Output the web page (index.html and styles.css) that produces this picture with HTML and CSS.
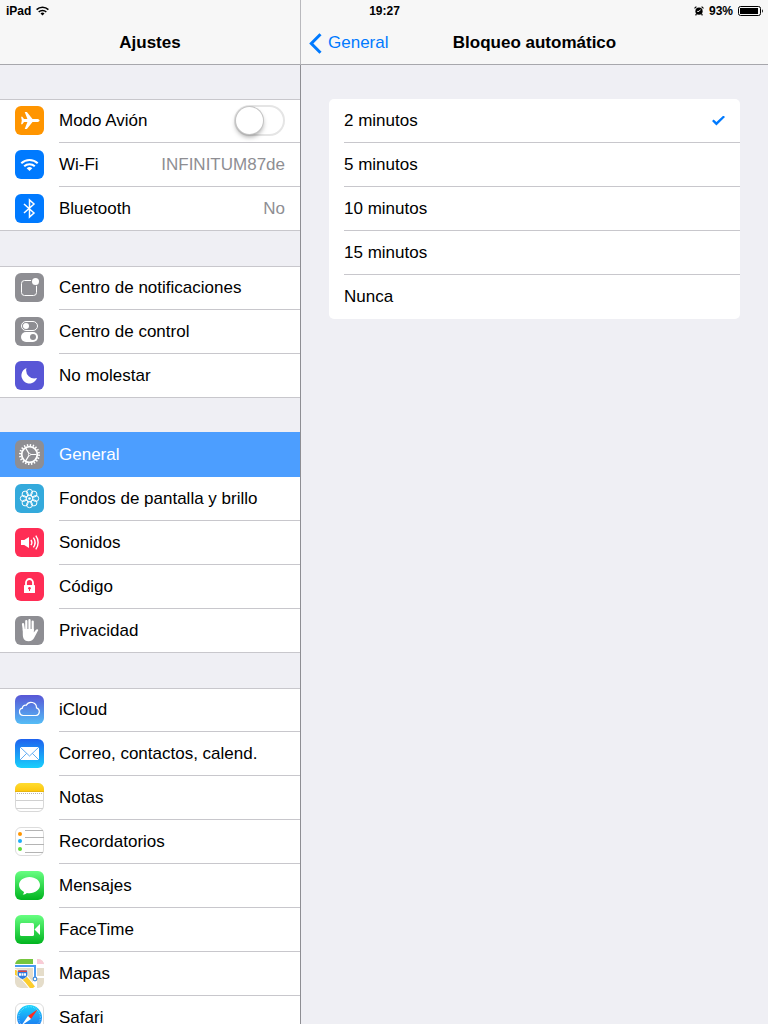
FILE: index.html
```html
<!DOCTYPE html>
<html lang="es">

<head>
    <meta charset="UTF-8">
    <meta name="viewport" content="width=device-width, initial-scale=1.0">
    <title>Ajustes</title>
    <link rel="stylesheet" href="styles.css">
</head>

<body>
    <!-- status bar -->
    <div class="status">
        <div class="status-left">
            <span>iPad</span>
            <svg width="13" height="10" viewBox="0 0 13 10" fill="none" stroke="#000" stroke-width="1.5">
                <path d="M.6 3.6a8.4 8.4 0 0 1 11.8 0M2.7 6a5.4 5.4 0 0 1 7.6 0" />
                <path d="M6.5 9.6L4.5 7.6a2.8 2.8 0 0 1 4 0z" fill="#000" stroke="none" />
            </svg>
        </div>
        <div>19:27</div>
        <div class="status-right">
            <svg width="10" height="10" viewBox="0 0 10 10" fill="none" stroke="#000">
                <circle cx="5" cy="5.2" r="3.6" fill="#000" stroke="none" />
                <path d="M.5 2.4L2.4.6M9.5 2.4L7.6.6M2.4 8l-.8 1.4M7.600 8l.8 1.4" stroke-width="1.2" />
                <path d="M6.5 3.600L5 5.400H3.200" stroke="#f7f7f7" />
            </svg>
            <span>93%</span>
            <svg width="25" height="10" viewBox="0 0 25 10">
                <rect x=".5" y=".5" width="22" height="9" rx="2" fill="none" stroke="#000" />
                <rect x="2" y="2" width="18" height="6" fill="#000" />
                <path d="M24 3.2c1.2.7 1.2 2.9 0 3.6z" fill="#000" />
            </svg>
        </div>
    </div>

    <div class="app">
        <!-- left column -->
        <nav class="sidebar">
            <header class="bar">
                <h1>Ajustes</h1>
            </header>
            <div class="scroll">
                <div class="group">
                    <div class="row">
                        <svg class="icon" viewBox="0 0 29 29">
                            <rect width="29" height="29" rx="6" fill="#ff9500" />
                            <path d="M24.6 14.5c0 .9-1.2 1.5-2.6 1.5h-4.500l-5.600 7h-2.200l2.7-7H9l-1.7 2.2H6.1l.7-3.7-.7-3.7h1.2L9 13h3.4L9.700 6h2.200l5.600 7H22c1.4 0 2.6.6 2.6 1.5z" fill="#fff" />
                        </svg>
                        <div class="cell">
                            <label for="avion">Modo Avión</label>
                            <input class="switch" type="checkbox" id="avion">
                        </div>
                    </div>
                    <a class="row" href="#wifi">
                        <svg class="icon" viewBox="0 0 29 29">
                            <rect width="29" height="29" rx="6" fill="#007aff" />
                            <path d="M6.3 13.2a11.8 11.8 0 0 1 16.4 0M9.2 16.3a7.6 7.6 0 0 1 10.6 0" fill="none" stroke="#fff" stroke-width="2" />
                            <path d="M14.5 21l-2.8-2.7a4 4 0 0 1 5.6 0z" fill="#fff" />
                        </svg>
                        <div class="cell"><span>Wi-Fi</span><span class="value">INFINITUM87de</span></div>
                    </a>
                    <a class="row" href="#bluetooth">
                        <svg class="icon" viewBox="0 0 29 29">
                            <rect width="29" height="29" rx="6" fill="#007aff" />
                            <path d="M9 10l10 9-4.500 4V6l4.500 4-10 9" fill="none" stroke="#fff" stroke-width="1.5" />
                        </svg>
                        <div class="cell"><span>Bluetooth</span><span class="value">No</span></div>
                    </a>
                </div>

                <div class="group">
                    <a class="row" href="#notificaciones">
                        <svg class="icon" viewBox="0 0 29 29">
                            <rect width="29" height="29" rx="6" fill="#8e8e93" />
                            <rect x="6.5" y="7.5" width="15" height="15" rx="3" fill="none" stroke="#fff" />
                            <circle cx="20.5" cy="8.5" r="4.6" fill="#8e8e93" />
                            <circle cx="20.5" cy="8.5" r="3.5" fill="#fff" />
                        </svg>
                        <div class="cell">Centro de notificaciones</div>
                    </a>
                    <a class="row" href="#control">
                        <svg class="icon" viewBox="0 0 29 29">
                            <rect width="29" height="29" rx="6" fill="#8e8e93" />
                            <rect x="6.5" y="4.5" width="16" height="9" rx="4.5" fill="none" stroke="#fff" />
                            <circle cx="11" cy="9" r="3" fill="#fff" />
                            <rect x="6" y="15" width="17" height="10" rx="5" fill="#fff" />
                            <circle cx="18" cy="20" r="3" fill="#8e8e93" />
                        </svg>
                        <div class="cell">Centro de control</div>
                    </a>
                    <a class="row" href="#no-molestar">
                        <svg class="icon" viewBox="0 0 29 29">
                            <rect width="29" height="29" rx="6" fill="#5856d6" />
                            <path d="M11.5 7A8 8 0 1 0 22 17a8.200 8.200 0 0 1-10.500-10z" fill="#fff" />
                        </svg>
                        <div class="cell">No molestar</div>
                    </a>
                </div>

                <div class="group">
                    <a class="row selected" href="#general">
                        <svg class="icon" viewBox="0 0 29 29" fill="none" stroke="#fff">
                            <rect width="29" height="29" rx="6" fill="#8e8e93" stroke="none" />
                            <circle cx="14.5" cy="14.5" r="9.5" stroke-width="2" stroke-dasharray="1.4 1.584" />
                            <circle cx="14.5" cy="14.5" r="7.8" stroke-width="1.8" />
                            <path d="M14.5 14.5h7M14.5 14.5l-3.8-6.4M14.5 14.5l-3.8 6.4" stroke-width="1.2" />
                            <circle cx="14.5" cy="14.5" r="1.1" fill="#8e8e93" stroke-width=".8" />
                        </svg>
                        <div class="cell">General</div>
                    </a>
                    <a class="row" href="#fondos">
                        <svg class="icon" viewBox="0 0 29 29" fill="none" stroke="#fff">
                            <rect width="29" height="29" rx="6" fill="#34aadc" stroke="none" />
                            <circle cx="14.5" cy="8.3" r="3" />
                            <circle cx="18.9" cy="10.1" r="3" />
                            <circle cx="20.7" cy="14.5" r="3" />
                            <circle cx="18.9" cy="18.9" r="3" />
                            <circle cx="14.5" cy="20.7" r="3" />
                            <circle cx="10.1" cy="18.9" r="3" />
                            <circle cx="8.3" cy="14.5" r="3" />
                            <circle cx="10.1" cy="10.1" r="3" />
                            <circle cx="14.5" cy="14.5" r="3.2" />
                            <circle cx="14.5" cy="14.5" r="1.3" fill="#fff" stroke="none" />
                        </svg>
                        <div class="cell">Fondos de pantalla y brillo</div>
                    </a>
                    <a class="row" href="#sonidos">
                        <svg class="icon" viewBox="0 0 29 29">
                            <rect width="29" height="29" rx="6" fill="#ff2d55" />
                            <path d="M6 12h3.200l4.800-3v11l-4.800-3H6z" fill="#fff" />
                            <path d="M16 11.800a5 5 0 0 1 0 5.400M18.400 9.600a8.500 8.500 0 0 1 0 9.800M20.800 7.600a11.500 11.500 0 0 1 0 13.800" fill="none" stroke="#fff" stroke-width="1.400" />
                        </svg>
                        <div class="cell">Sonidos</div>
                    </a>
                    <a class="row" href="#codigo">
                        <svg class="icon" viewBox="0 0 29 29">
                            <rect width="29" height="29" rx="6" fill="#ff2d55" />
                            <path d="M11 13.5v-3a3.5 3.5 0 0 1 7 0v3" fill="none" stroke="#fff" stroke-width="1.8" />
                            <rect x="9" y="13" width="11" height="8" rx=".6" fill="#fff" />
                            <circle cx="14.5" cy="16.2" r="1.3" fill="#ff2d55" />
                            <path d="M14.5 16v3" stroke="#ff2d55" />
                        </svg>
                        <div class="cell">Código</div>
                    </a>
                    <a class="row" href="#privacidad">
                        <svg class="icon" viewBox="0 0 29 29">
                            <rect width="29" height="29" rx="6" fill="#8e8e93" />
                            <path d="M8 8l1 7M11.3 5v9M14.500 4v10M17.700 5.500v9" stroke="#fff" stroke-width="2.200" stroke-linecap="round" />
                            <path d="M7.800 13h11v3.500l2-2.600c.8-.9 2.200-.6 2.500 0l-3.700 7c-1.500 3-3.100 4.300-6.200 4.300-4.200 0-5.600-3-5.600-7z" fill="#fff" />
                        </svg>
                        <div class="cell">Privacidad</div>
                    </a>
                </div>

                <div class="group">
                    <a class="row" href="#icloud">
                        <svg class="icon" viewBox="0 0 29 29">
                            <linearGradient id="g-cloud" x2="0" y2="1">
                                <stop stop-color="#5856d6" />
                                <stop offset="1" stop-color="#55bdf6" />
                            </linearGradient>
                            <rect width="29" height="29" rx="6" fill="url(#g-cloud)" />
                            <path d="M8 20.5a3.7 3.7 0 0 1-.6-7.3 3 3 0 0 1 3.9-2.9 5.4 5.4 0 0 1 10.2 2.6 3.9 3.9 0 0 1-.4 7.6z" fill="none" stroke="#fff" stroke-width="1.2" />
                        </svg>
                        <div class="cell">iCloud</div>
                    </a>
                    <a class="row" href="#correo">
                        <svg class="icon" viewBox="0 0 29 29">
                            <linearGradient id="g-mail" x2="0" y2="1">
                                <stop stop-color="#1e62ef" />
                                <stop offset="1" stop-color="#19d0fc" />
                            </linearGradient>
                            <rect width="29" height="29" rx="6" fill="url(#g-mail)" />
                            <rect x="5" y="8" width="19" height="13" rx=".5" fill="#fff" />
                            <path d="M5 8l9.5 9L24 8M5 21l6.6-6.6M24 21l-6.6-6.6" fill="none" stroke="#3b98f0" stroke-width=".8" />
                        </svg>
                        <div class="cell">Correo, contactos, calend.</div>
                    </a>
                    <a class="row" href="#notas">
                        <svg class="icon" viewBox="0 0 29 29">
                            <linearGradient id="g-notes" x2="0" y2="1">
                                <stop stop-color="#ffdc30" />
                                <stop offset="1" stop-color="#fdc50a" />
                            </linearGradient>
                            <rect x=".5" y=".5" width="28" height="28" rx="5.5" fill="#fff" stroke="#d8d8d8" />
                            <path d="M0 9V6a6 6 0 0 1 6-6h17a6 6 0 0 1 6 6v3z" fill="url(#g-notes)" />
                            <path d="M1 17.5h27M1 25.5h27" stroke="#d0d0d0" />
                            <path d="M0 8.5h29" stroke="#d9ab13" stroke-width=".6" />
                            <path d="M2 10.5h26" stroke="#b5b5b5" stroke-dasharray="1 1" />
                        </svg>
                        <div class="cell">Notas</div>
                    </a>
                    <a class="row" href="#recordatorios">
                        <svg class="icon" viewBox="0 0 29 29">
                            <rect x=".5" y=".5" width="28" height="28" rx="5.5" fill="#fff" stroke="#dcdcdc" />
                            <path d="M10 3.5h18M10 10.5h19M10 17.5h19M10 25.5h18" stroke="#b4b4b4" />
                            <circle cx="5" cy="7" r="2" fill="#ff9500" />
                            <circle cx="5" cy="14" r="2" fill="#1badf8" />
                            <circle cx="5" cy="22" r="2" fill="#63da38" />
                        </svg>
                        <div class="cell">Recordatorios</div>
                    </a>
                    <a class="row" href="#mensajes">
                        <svg class="icon" viewBox="0 0 29 29">
                            <linearGradient id="g-green" x2="0" y2="1">
                                <stop stop-color="#67ff81" />
                                <stop offset="1" stop-color="#01b41f" />
                            </linearGradient>
                            <rect width="29" height="29" rx="6" fill="url(#g-green)" />
                            <path d="M14.5 6c5.8 0 10.5 3.6 10.5 8.1s-4.7 8.1-10.5 8.1c-1 0-1.9-.1-2.7-.3-1 .9-2.5 1.6-4.3 1.7.8-.7 1.4-1.6 1.5-2.7C6 19.5 4 17 4 14.1 4 9.6 8.7 6 14.5 6z" fill="#fff" />
                        </svg>
                        <div class="cell">Mensajes</div>
                    </a>
                    <a class="row" href="#facetime">
                        <svg class="icon" viewBox="0 0 29 29">
                            <rect width="29" height="29" rx="6" fill="url(#g-green)" />
                            <rect x="5" y="8" width="14" height="13" rx="1.5" fill="#fff" />
                            <path d="M19.5 14.5L25 9v11z" fill="#fff" />
                        </svg>
                        <div class="cell">FaceTime</div>
                    </a>
                    <a class="row" href="#mapas">
                        <svg class="icon" viewBox="0 0 29 29">
                            <clipPath id="c-map">
                                <rect width="29" height="29" rx="6" />
                            </clipPath>
                            <g clip-path="url(#c-map)">
                                <rect width="29" height="29" fill="#e5ddca" />
                                <path d="M0 0h18v5H0z" fill="#76c63f" />
                                <path d="M22 0h7v5h-7z" fill="#f9cbd6" />
                                <path d="M0 5h29v4H0zM18 0h4v29h-4zM22 17h7v2h-7z" fill="#fff" />
                                <path d="M-1 13c8 2 12 7 19 16" fill="none" stroke="#fff" stroke-width="7" />
                                <path d="M-1 13c8 2 12 7 19 16" fill="none" stroke="#fccd2d" stroke-width="5" />
                                <path d="M0 7h20v12" fill="none" stroke="#4a9bf2" stroke-width="2" />
                                <circle cx="20" cy="20" r="1.8" fill="#fff" stroke="#4a90d9" stroke-width="1.2" />
                                <path d="M3 11h9c1.600 4 1 7.500-4.500 9.500C2 18.500 1.400 15 3 11z" fill="#2f7be0" stroke="#fff" stroke-width=".6" />
                                <path d="M3.200 12.200h8.600" stroke="#e0433c" stroke-width="1.5" />
                                <path d="M4 15.500h7" stroke="#fff" stroke-width="2.5" stroke-dasharray="2 .5" />
                            </g>
                        </svg>
                        <div class="cell">Mapas</div>
                    </a>
                    <a class="row" href="#safari">
                        <svg class="icon" viewBox="0 0 29 29">
                            <linearGradient id="g-safari" x2="0" y2="1">
                                <stop stop-color="#19d5fc" />
                                <stop offset="1" stop-color="#1e69ef" />
                            </linearGradient>
                            <rect x=".5" y=".5" width="28" height="28" rx="5.5" fill="#fff" stroke="#dcdcdc" />
                            <circle cx="14.5" cy="14.5" r="12.5" fill="url(#g-safari)" />
                            <circle cx="14.5" cy="14.5" r="10.8" fill="none" stroke="#fff" stroke-width="1.2" stroke-dasharray=".4 1.3" opacity=".7" />
                            <path d="M22.5 6.5l-6.500 9.500-3-3z" fill="#ff2a1f" />
                            <path d="M6.5 22.5L13 13l3 3z" fill="#fff" />
                        </svg>
                        <div class="cell">Safari</div>
                    </a>
                </div>
            </div>
        </nav>

        <!-- right column -->
        <main class="detail">
            <header class="bar">
                <a class="back" href="#general">
                    <svg width="13" height="21" viewBox="0 0 13 21" fill="none" stroke="#007aff" stroke-width="3">
                        <path d="M11.5 1.3L2.3 10.5l9.2 9.2" />
                    </svg>
                    General
                </a>
                <h2>Bloqueo automático</h2>
            </header>
            <form class="options">
                <label class="option"><span>2 minutos</span><input type="radio" name="bloqueo" checked></label>
                <label class="option"><span>5 minutos</span><input type="radio" name="bloqueo"></label>
                <label class="option"><span>10 minutos</span><input type="radio" name="bloqueo"></label>
                <label class="option"><span>15 minutos</span><input type="radio" name="bloqueo"></label>
                <label class="option"><span>Nunca</span><input type="radio" name="bloqueo"></label>
            </form>
        </main>
    </div>
</body>

</html>
```
FILE: styles.css
```css
* {
    margin: 0;
    padding: 0;
    box-sizing: border-box;
}

body {
    font-family: "Liberation Sans", Arial, sans-serif;
    font-size: 17px;
    line-height: 20px;
    color: #000;
    background-color: #efeff4;
}

a {
    color: inherit;
    text-decoration: none;
}

svg {
    display: block;
    flex: none;
}

/* status bar floats over both columns */
.status {
    position: absolute;
    top: 0;
    left: 0;
    right: 0;
    z-index: 1;
    display: grid;
    grid-template-columns: 1fr auto 1fr;
    align-items: center;
    height: 21px;
    padding: 0 5px 0 6px;
    font-size: 12px;
    font-weight: bold;
}

.status-left,
.status-right {
    display: flex;
    align-items: center;
    gap: 5px;
}

.status-right {
    justify-content: flex-end;
}

.app {
    display: flex;
    height: 100vh;
    overflow: hidden;
}

.sidebar {
    display: flex;
    flex-direction: column;
    flex: 0 0 301px;
}

.sidebar .bar {
    border-right: 1px solid #b9b9bd;
}

.detail {
    flex: 1;
    min-width: 0;
}

.bar {
    display: grid;
    grid-template-columns: 1fr auto 1fr;
    align-items: center;
    flex: none;
    height: 65px;
    padding: 22px 8px 0;
    background-color: #f7f7f7;
    border-bottom: 1px solid #a7a7ac;
}

.bar h1,
.bar h2 {
    grid-column: 2;
    font-size: 17px;
    font-weight: bold;
}

.back {
    display: flex;
    align-items: center;
    gap: 6px;
    color: #007aff;
}

.scroll {
    flex: 1;
    min-height: 0;
    padding-top: 34px;
    overflow-y: auto;
    scrollbar-width: none;
    border-right: 1px solid #8e8e93;
}

/* groups of the left list */
.group {
    margin-bottom: 35px;
    background-color: #fff;
    box-shadow: inset 0 1px #c8c7cc;
}

.row {
    display: flex;
    height: 44px;
    padding-left: 15px;
}

.icon {
    width: 29px;
    height: 29px;
    margin: 7px 15px 0 0;
}

.cell {
    flex: 1;
    display: flex;
    align-items: center;
    justify-content: space-between;
    padding-right: 15px;
    border-bottom: 1px solid #c8c7cc;
}

.row:last-child {
    border-bottom: 1px solid #c8c7cc;
}

.row:last-child .cell {
    border-bottom: 0;
}

.value {
    color: #8e8e93;
}

.selected {
    color: #fff;
    background-color: #4c9eff;
    box-shadow: 0 -1px #4c9eff;
}

.selected .cell {
    border-bottom-color: #4c9eff;
}

.switch {
    appearance: none;
    width: 51px;
    height: 31px;
    border: 2px solid #e5e5e5;
    border-radius: 16px;
    background-color: #fff;
}

.switch::before {
    content: "";
    display: block;
    width: 27px;
    height: 27px;
    border-radius: 50%;
    background-color: #fff;
    box-shadow: 0 0 0 1px #c4c4c4, 0 3px 5px rgba(0, 0, 0, 0.35);
}

.switch:checked {
    border-color: #4cd964;
    background-color: #4cd964;
}

.switch:checked::before {
    margin-left: 20px;
}

/* options card */
.options {
    margin: 34px 28px 0;
    padding-left: 15px;
    background-color: #fff;
    border-radius: 5px;
}

.option {
    display: flex;
    align-items: center;
    justify-content: space-between;
    height: 44px;
    padding-right: 15px;
    border-bottom: 1px solid #c8c7cc;
}

.option:last-child {
    border-bottom-color: transparent;
}

.option input {
    appearance: none;
    width: 13px;
    height: 10px;
}

.option input:checked {
    background-color: #007aff;
    clip-path: polygon(0 55%, 13% 40%, 34% 64%, 88% 0, 100% 14%, 34% 100%);
}
```
